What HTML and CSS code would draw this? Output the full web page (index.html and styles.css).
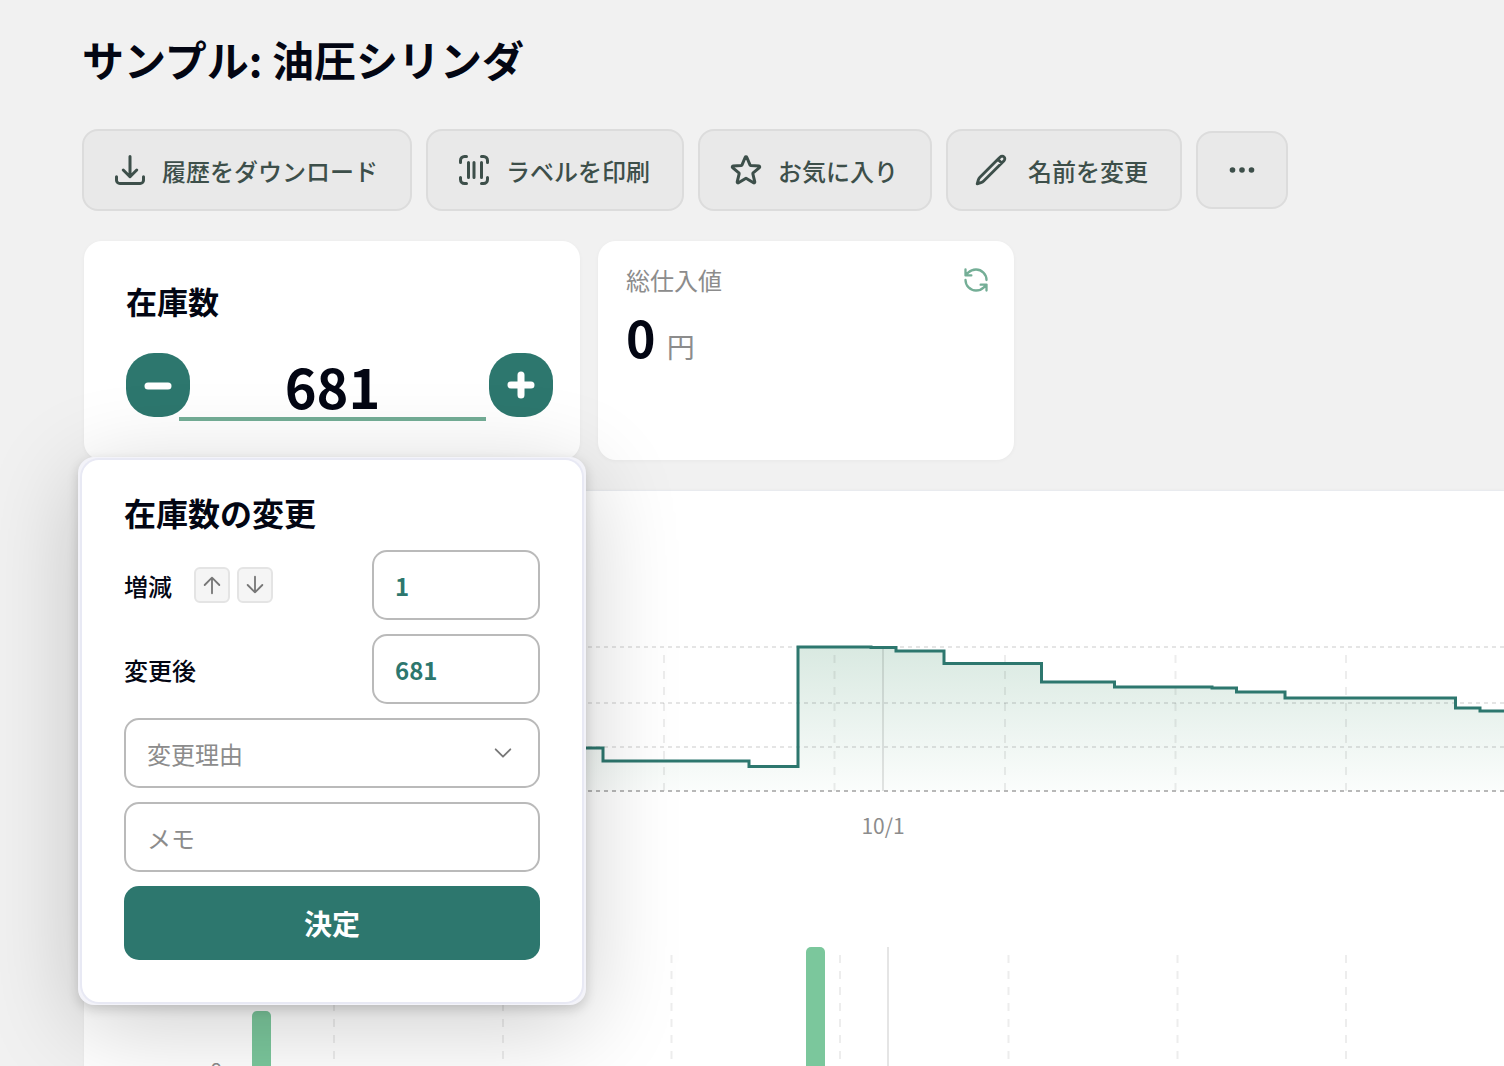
FILE: index.html
```html
<!DOCTYPE html>
<html lang="ja">
  <head>
    <meta charset="UTF-8">
    <meta name="viewport" content="width=device-width, initial-scale=1.0">
    <title>サンプル: 油圧シリンダ</title>
    <link rel="stylesheet" href="styles.css">
  </head>
  <body>
    <main class="page">
        <h1 class="page-title">サンプル: 油圧シリンダ</h1>

        <div class="toolbar">
            <button type="button" class="tool-button">
                <svg class="icon" viewBox="0 0 24 24"><path d="M3 16.5v2.25A2.25 2.25 0 0 0 5.25 21h13.5A2.25 2.25 0 0 0 21 18.75V16.5M16.5 12 12 16.5m0 0L7.5 12m4.5 4.5V3"/></svg>
                履歴をダウンロード
            </button>
            <button type="button" class="tool-button">
                <svg class="icon icon-barcode" viewBox="0 0 36 36"><path d="M4.5 10.5V8.500a4 4 0 0 1 4-4h2M25.500 4.500h2a4 4 0 0 1 4 4v2M31.500 25.500v2a4 4 0 0 1-4 4h-2M10.500 31.500h-2a4 4 0 0 1-4-4v-2M12.500 10.500v15M18 10.500v15M25.500 10.500v15"/></svg>
                ラベルを印刷
            </button>
            <button type="button" class="tool-button">
                <svg class="icon" viewBox="0 0 24 24"><path d="M11.48 3.499a.562.562 0 0 1 1.04 0l2.125 5.111a.563.563 0 0 0 .475.345l5.518.442c.499.04.701.663.321.988l-4.204 3.602a.563.563 0 0 0-.182.557l1.285 5.385a.562.562 0 0 1-.84.61l-4.725-2.885a.562.562 0 0 0-.586 0L6.982 20.54a.562.562 0 0 1-.84-.61l1.285-5.386a.562.562 0 0 0-.182-.557l-4.204-3.602a.562.562 0 0 1 .321-.988l5.518-.442a.563.563 0 0 0 .475-.345L11.48 3.5Z"/></svg>
                お気に入り
            </button>
            <button type="button" class="tool-button tool-rename">
                <svg class="icon" viewBox="0 0 24 24"><path d="m16.862 4.487 1.687-1.688a1.875 1.875 0 1 1 2.652 2.652L6.832 19.82a4.5 4.5 0 0 1-1.897 1.13l-2.685.8.8-2.685a4.5 4.5 0 0 1 1.13-1.897L16.863 4.487Zm0 0L19.5 7.125"/></svg>
                名前を変更
            </button>
            <button type="button" class="tool-button tool-more" aria-label="その他">
                <svg class="icon-dots" viewBox="0 0 32 32"><circle cx="6.500" cy="16" r="2.800"/><circle cx="16" cy="16" r="2.800"/><circle cx="25.500" cy="16" r="2.800"/></svg>
            </button>
        </div>

        <div class="cards">
            <section class="card stock-card">
                <h2 class="stock-title"><label for="stock">在庫数</label></h2>
                <div class="stepper">
                    <button type="button" class="step-button" aria-label="減らす">
                        <svg viewBox="0 0 32 32"><path d="M6 17h20"/></svg>
                    </button>
                    <input class="stock-input" id="stock" type="text" inputmode="numeric" value="681">
                    <button type="button" class="step-button" aria-label="増やす">
                        <svg viewBox="0 0 32 32"><path d="M6 16h20M16 6v20"/></svg>
                    </button>
                </div>

                <div class="popup">
                    <form class="popup-body">
                        <h2 class="popup-title">在庫数の変更</h2>
                        <div class="field-row">
                            <label for="delta">増減</label>
                            <span class="keys">
                                <kbd><svg viewBox="0 0 24 24"><path d="M12 21V4M4 12l8-8 8 8"/></svg></kbd>
                                <kbd><svg viewBox="0 0 24 24"><path d="M12 3v17M4 12l8 8 8-8"/></svg></kbd>
                            </span>
                            <input class="field number-field" id="delta" type="text" inputmode="numeric" value="1">
                        </div>
                        <div class="field-row">
                            <label for="after">変更後</label>
                            <input class="field number-field" id="after" type="text" inputmode="numeric" value="681">
                        </div>
                        <div class="select-wrap">
                            <select class="field" aria-label="変更理由">
                                <option>変更理由</option>
                            </select>
                            <svg class="chevron" viewBox="0 0 24 24"><path d="m4 8 8 8 8-8"/></svg>
                        </div>
                        <input class="field" type="text" placeholder="メモ" aria-label="メモ">
                        <button type="submit" class="submit-button">決定</button>
                    </form>
                </div>
            </section>

            <section class="card price-card">
                <div class="price-head">
                    <h2 class="price-title">総仕入値</h2>
                    <button type="button" class="refresh-button" aria-label="更新">
                        <svg viewBox="0 0 24 24"><path d="M21 12a9 9 0 0 0-9-9 9.75 9.75 0 0 0-6.74 2.74L3 8M3 3v5h5M3 12a9 9 0 0 0 9 9 9.75 9.75 0 0 0 6.74-2.74L21 16M16 16h5v5"/></svg>
                    </button>
                </div>
                <p class="price">0 <span class="unit">円</span></p>
            </section>
        </div>

        <section class="charts">
            <!-- stock level -->
            <svg class="chart" width="1680" height="380" role="img" aria-label="在庫数の推移">
                <defs>
                    <linearGradient id="area" x1="0" y1="156" x2="0" y2="300" gradientUnits="userSpaceOnUse">
                        <stop offset="0" stop-color="#d9e9e1"/>
                        <stop offset="1" stop-color="#fbfdfc"/>
                    </linearGradient>
                </defs>
                <path class="area" d="M80 257H519V270H665V275.5H714V156H787V156.5H812V160H860V172.5H957.5V191H1030.5V196H1128V197H1152.5V201H1201V207H1371.5V217H1396V220H1680V300H80Z"/>
                <path class="grid-h" d="M80 156H1680M80 212H1680M80 256H1680"/>
                <path class="grid-v" d="M239 300V156M409.5 300V156M580 300V156M750.5 300V156M921 300V156M1091.5 300V156M1262 300V156M1432.5 300V156"/>
                <path class="month-line" d="M799 300V156"/>
                <path class="axis" d="M80 300H1680"/>
                <path class="line" d="M80 257H519V270H665V275.5H714V156H787V156.5H812V160H860V172.5H957.5V191H1030.5V196H1128V197H1152.5V201H1201V207H1371.5V217H1396V220H1680"/>
                <text class="tick" x="799" y="343" text-anchor="middle">10/1</text>
            </svg>
            <!-- daily in / out -->
            <svg class="chart" width="1680" height="260" role="img" aria-label="入出庫数">
                <path class="grid-v" d="M250 84V250M419 84V250M587.5 84V250M756 84V250M924.5 84V250M1093.5 84V250M1262 84V250M1430.5 84V250"/>
                <path class="month-line" d="M804 76V250"/>
                <rect class="bar" x="168" y="140" width="19" height="120" rx="5"/>
                <rect class="bar" x="722" y="76" width="19" height="184" rx="5"/>
                <text class="tick" x="138" y="208" text-anchor="end">8</text>
            </svg>
        </section>
    </main>
  </body>
</html>
```
FILE: styles.css
```css
:root {
    --primary: #2d776e;
    --primary-light: #74ae96;
    --bg: #f1f1f1;
    --text: #030613;
    --text-button: #3d4f4a;
    --text-muted: #8c8c8c;
    --border: #bababa;
}

* {
    box-sizing: border-box;
}

body {
    margin: 0;
    background: var(--bg);
    color: var(--text);
    font-family: "Noto Sans CJK JP", sans-serif;
    font-size: 24px;
}

h1, h2, p {
    margin: 0;
}

button, input, select {
    font: inherit;
    color: inherit;
}

button {
    cursor: pointer;
}

svg {
    display: block;
    fill: none;
    stroke: currentColor;
    stroke-linecap: round;
    stroke-linejoin: round;
}

.page {
    height: 100vh;
    padding: 30px 0 0 82px;
    overflow: hidden;
}

.page-title {
    font-size: 42px;
    line-height: 57px;
    font-weight: 700;
    margin-bottom: 42px;
}

.toolbar {
    display: flex;
    align-items: center;
    gap: 14px;
    margin-bottom: 30px;
}

.tool-button {
    display: flex;
    align-items: center;
    gap: 14px;
    height: 82px;
    padding: 0 32px 0 28px;
    background: #e9e9e9;
    border: 2px solid #dcdcdc;
    border-radius: 16px;
    color: var(--text-button);
    font-weight: 500;
    white-space: nowrap;
}

.icon {
    width: 36px;
    height: 36px;
    stroke-width: 2;
}

.icon-barcode {
    stroke-width: 3;
}

.tool-rename {
    gap: 20px;
    padding-left: 26px;
}

.tool-rename .icon {
    width: 34px;
    height: 34px;
}

.tool-more {
    height: 78px;
    padding: 0 28px;
}

.icon-dots {
    width: 32px;
    height: 32px;
    fill: currentColor;
    stroke: none;
}

.cards {
    display: flex;
    gap: 18px;
    margin: 0 2px 30px;
}

.card {
    height: 219px;
    background: #fff;
    border-radius: 18px;
    box-shadow: 0 1px 4px rgba(0, 0, 0, 0.04);
}

.stock-card {
    position: relative;
    width: 496px;
    padding: 40px 27px 0 42px;
}

.stock-title {
    font-size: 31px;
    line-height: 40px;
    font-weight: 700;
}

.stepper {
    display: flex;
    margin-top: 32px;
}

.step-button {
    display: flex;
    align-items: center;
    justify-content: center;
    flex: none;
    width: 64px;
    height: 64px;
    padding: 0;
    border: 0;
    border-radius: 28px;
    background: var(--primary);
    color: #fff;
}

.step-button svg {
    width: 32px;
    height: 32px;
    stroke-width: 7;
}

.stock-input {
    flex: 1;
    min-width: 0;
    height: 68px;
    margin: 0 3px 0 -11px;
    padding: 0;
    border: 0;
    border-bottom: 4px solid var(--primary-light);
    background: none;
    font-size: 54px;
    font-weight: 700;
    text-align: center;
}

.popup {
    position: absolute;
    z-index: 1;
    top: 216px;
    left: -6px;
    width: 508px;
    padding: 3px 4px;
    background: #f3f3f9;
    border-radius: 16px;
    box-shadow: 0 4px 12px rgba(0, 0, 0, 0.16), 0 20px 96px rgba(0, 0, 0, 0.2);
}

.popup-body {
    display: flex;
    flex-direction: column;
    gap: 14px;
    padding: 32px 42px 42px;
    background: #fff;
    border-radius: 17px;
    box-shadow: 0 0 0 2px #e8e9f4;
}

.popup-title {
    font-size: 32px;
    line-height: 40px;
    font-weight: 700;
    margin-bottom: 4px;
}

.field-row {
    display: flex;
    align-items: center;
    font-weight: 500;
}

.keys {
    display: flex;
    gap: 7px;
    margin-left: 22px;
}

kbd {
    display: flex;
    align-items: center;
    justify-content: center;
    width: 36px;
    height: 36px;
    background: #f5f5f5;
    border: 2px solid #e4e4e4;
    border-radius: 6px;
    color: #777;
}

kbd svg {
    width: 22px;
    height: 22px;
    stroke-width: 2;
}

.field {
    width: 100%;
    height: 70px;
    padding: 0 21px;
    background: #fff;
    border: 2px solid var(--border);
    border-radius: 15px;
}

.field::placeholder {
    color: var(--text-muted);
    opacity: 1;
}

.number-field {
    width: 168px;
    margin-left: auto;
    color: var(--primary);
    font-weight: 700;
}

.select-wrap {
    position: relative;
}

.select-wrap .field {
    display: block;
    appearance: none;
    color: var(--text-muted);
}

.chevron {
    position: absolute;
    top: 24px;
    right: 26px;
    width: 22px;
    height: 22px;
    color: #777;
    stroke-width: 2;
    pointer-events: none;
}

.submit-button {
    height: 74px;
    border: 0;
    border-radius: 15px;
    background: var(--primary);
    color: #fff;
    font-size: 28px;
    font-weight: 700;
}

.price-card {
    width: 416px;
    padding: 21px 24px 0 28px;
}

.price-head {
    display: flex;
    align-items: center;
    justify-content: space-between;
}

.price-title {
    font-size: 24px;
    line-height: 36px;
    font-weight: 400;
    color: var(--text-muted);
}

.refresh-button {
    padding: 0;
    border: 0;
    background: none;
    color: var(--primary-light);
}

.refresh-button svg {
    width: 28px;
    height: 28px;
    stroke-width: 2;
}

.price {
    margin-top: 2px;
    font-size: 50px;
    line-height: 72px;
    font-weight: 700;
}

.unit {
    font-size: 28px;
    font-weight: 400;
    color: var(--text-muted);
}

.charts {
    margin-left: 2px;
    background: #fff;
    border-top: 1px solid #e9ebef;
    box-shadow: 0 0 4px rgba(0, 0, 0, 0.03);
    overflow: hidden;
}

.area {
    fill: url(#area);
    stroke: none;
}

.line {
    stroke: var(--primary);
    stroke-width: 3;
    stroke-linecap: butt;
    stroke-linejoin: miter;
}

.grid-h, .grid-v, .axis, .month-line {
    stroke: rgba(0, 0, 0, 0.1);
    stroke-width: 2;
    stroke-linecap: butt;
}

.grid-h {
    stroke-dasharray: 4 4;
}

.grid-v {
    stroke: rgba(0, 0, 0, 0.07);
    stroke-dasharray: 8 8;
}

.axis {
    stroke: #b8b8b8;
    stroke-dasharray: 4 4;
}

.bar {
    fill: #7bc79c;
    stroke: none;
}

.tick {
    fill: var(--text-muted);
    stroke: none;
    font-size: 21px;
}
```
